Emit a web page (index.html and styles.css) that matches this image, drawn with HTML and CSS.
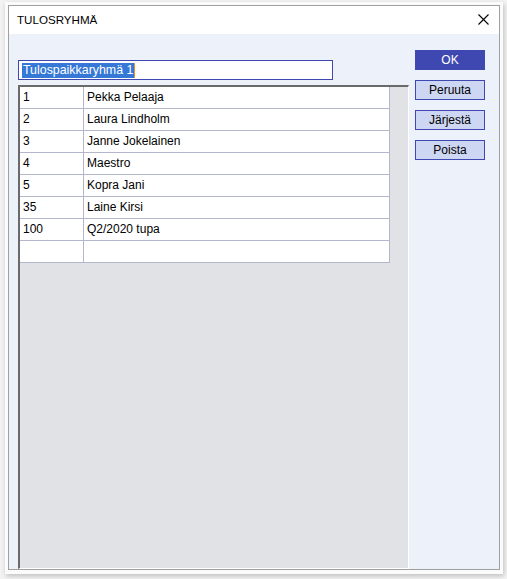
FILE: index.html
```html
<!DOCTYPE html>
<html>
<head>
<meta charset="utf-8">
<link rel="stylesheet" href="styles.css">
</head>
<body>
<div class="window">
  <div class="frame">
    <div class="titlebar">
      <span class="title">TULOSRYHMÄ</span>
      <svg class="close" width="11" height="11" viewBox="0 0 11 11"><path d="M0.5 0.5 L10.5 10.5 M10.5 0.5 L0.5 10.5" stroke="#000" stroke-width="1.1" fill="none"/></svg>
    </div>
    <div class="content">
      <div class="left">
        <div class="input"><span class="sel">Tulospaikkaryhmä 1</span><span class="caret"></span></div>
        <div class="grid">
          <table class="table">
            <tr><td class="c1">1</td><td class="c2">Pekka Pelaaja</td></tr>
            <tr><td class="c1">2</td><td class="c2">Laura Lindholm</td></tr>
            <tr><td class="c1">3</td><td class="c2">Janne Jokelainen</td></tr>
            <tr><td class="c1">4</td><td class="c2">Maestro</td></tr>
            <tr><td class="c1">5</td><td class="c2">Kopra Jani</td></tr>
            <tr><td class="c1">35</td><td class="c2">Laine Kirsi</td></tr>
            <tr><td class="c1">100</td><td class="c2">Q2/2020 tupa</td></tr>
            <tr><td class="c1"></td><td class="c2"></td></tr>
          </table>
        </div>
      </div>
      <div class="right">
        <div class="btn primary">OK</div>
        <div class="btn">Peruuta</div>
        <div class="btn">Järjestä</div>
        <div class="btn">Poista</div>
      </div>
    </div>
  </div>
</div>
</body>
</html>
```
FILE: styles.css
```css
html, body {
  margin: 0;
  padding: 0;
  background: #f3f3f3;
  width: 507px;
  height: 579px;
  overflow: hidden;
  font-family: "Liberation Sans", Arial, sans-serif;
  font-size: 12px;
  color: #000;
}
.window {
  margin: 2px 0 0 5px;
  width: 498px;
  height: 572px;
  box-sizing: border-box;
  background: #fbfbfb;
  padding: 3px 3px 4px 3px;
  box-shadow: 1px 2px 5px rgba(0,0,0,0.22);
}
.frame {
  height: 100%;
  box-sizing: border-box;
  border: 1px solid #a0a0a0;
  display: flex;
  flex-direction: column;
}
.titlebar {
  height: 28px;
  background: #fff;
  display: flex;
  align-items: center;
  justify-content: space-between;
  padding: 0 10px 0 8px;
  flex: none;
}
.title {
  font-size: 11.6px;
  position: relative;
  top: -1px;
}
.close {
  display: block;
  position: relative;
  top: -1px;
}
.content {
  flex: 1;
  display: flex;
  background: #edf1fa;
  min-height: 0;
}
.left {
  padding: 26px 0 0 9px;
  display: flex;
  flex-direction: column;
}
.input {
  width: 315px;
  height: 20px;
  box-sizing: border-box;
  border: 1px solid #3f48b0;
  background: #fff;
  display: flex;
  align-items: center;
  padding-left: 3px;
  margin-bottom: 5px;
}
.sel {
  background: #3578d6;
  color: #fff;
  font-size: 12.4px;
  line-height: 15px;
  padding: 0 1px 0 1px;
}
.caret {
  width: 1px;
  height: 15px;
  background: #e8902c;
}
.grid {
  flex: 1;
  width: 391px;
  box-sizing: border-box;
  border-top: 2px solid #6a6a6a;
  border-left: 2px solid #6a6a6a;
  border-right: 1px solid #ffffff;
  border-bottom: 1px solid #ffffff;
  background: #e1e2e6;
}
.table {
  border-collapse: collapse;
  width: 370px;
  background: #fff;
}
.table td {
  height: 21px;
  padding: 0 0 0 3px;
  border-bottom: 1px solid #b4b7cb;
  border-right: 1px solid #b4b7cb;
  white-space: nowrap;
  vertical-align: middle;
  line-height: 21px;
}
.c1 {
  width: 60px;
}
.right {
  padding: 16px 0 0 6px;
  display: flex;
  flex-direction: column;
  gap: 10px;
}
.btn {
  width: 70px;
  height: 20px;
  box-sizing: border-box;
  border: 1px solid #3f48b0;
  background: #cdd6f2;
  display: flex;
  align-items: center;
  justify-content: center;
  font-size: 12px;
}
.primary {
  background: #3f48b0;
  color: #fff;
}
```
